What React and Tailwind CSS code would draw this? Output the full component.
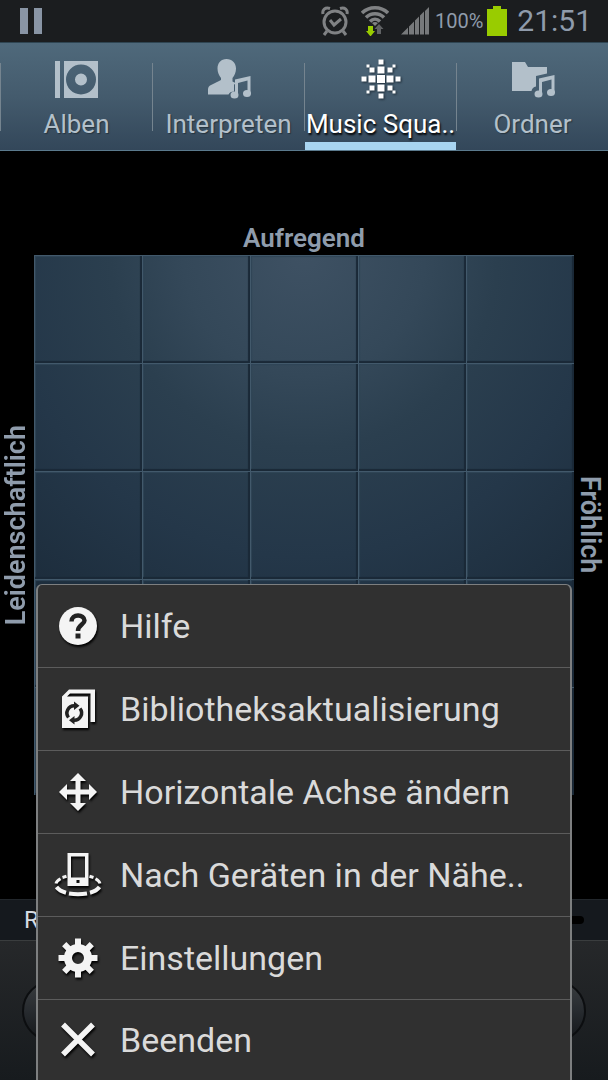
import React, { useState } from "react";
import clsx from "clsx";

const Notes = ({ x, y }) => (
  <g transform={`translate(${x} ${y})`}>
    <path d="M4 3.500 19.500 0v18h-3V4.500L7 7V20H4Z" />
    <ellipse cx="3.500" cy="19" rx="4" ry="3.500" />
    <ellipse cx="16" cy="17.500" rx="4" ry="3.500" />
  </g>
);

const AlbumIcon = () => (
  <svg viewBox="0 0 48 42" className="h-[42px] w-12" fill="currentColor">
    <path d="M2 3h5v37H2Z" />
    <path
      fillRule="evenodd"
      d="M11 3h34v37H11ZM28 6.500a15 15 0 1 0 0 30 15 15 0 0 0 0-30ZM28 15.500a6 6 0 1 1 0 12 6 6 0 0 1 0-12Z"
    />
  </svg>
);

const ArtistIcon = () => (
  <svg viewBox="0 0 48 42" className="h-[42px] w-12" fill="currentColor">
    <path d="M21.500 1c5.500 0 9.500 4 9.500 9.500 0 4-1.500 7-3.500 9.500v3.500l4 2-2.500 1v7c-3 0-4.500 1-5.500 3H3v-5c0-2.500 1-3.500 3-4.500l10-5V20c-2-2.500-3.500-5.500-3.500-9.500C12.500 5 16 1 21.500 1Z" />
    <Notes x="26" y="18" />
  </svg>
);

const squares = [
  [0, 0, 8],
  [0, 9, 7], [0, -9, 7], [9, 0, 7], [-9, 0, 7],
  [0, 17, 5], [0, -17, 5], [17, 0, 5], [-17, 0, 5],
  [9, 9, 5], [-9, 9, 5], [9, -9, 5], [-9, -9, 5],
  [13, 13, 3], [-13, 13, 3], [13, -13, 3], [-13, -13, 3],
];

const SquareIcon = () => (
  <svg viewBox="0 0 48 42" className="h-[42px] w-12 drop-shadow-[1px_1px_1px_#1c2a35]" fill="currentColor">
    {squares.map(([x, y, s]) => (
      <rect key={`${x},${y}`} x={24 + x - s / 2} y={21 + y - s / 2} width={s} height={s} />
    ))}
  </svg>
);

const FolderIcon = () => (
  <svg viewBox="0 0 48 42" className="h-[42px] w-12" fill="currentColor">
    <path d="M3 4h13l3 5h19v6.500L27 18v10.500c-2.500.5-4 2-4.500 4.500H3Z" />
    <Notes x="26" y="17" />
  </svg>
);

const HelpIcon = () => (
  <svg viewBox="0 0 48 48" className="size-12 drop-shadow-[1px_2px_1px_#000]">
    <circle cx="24" cy="24" r="19" fill="#f4f4f4" />
    <path d="M17.500 19.500C17.500 11.500 30.500 12 30.500 18.500 30.500 22.500 24 23 24 29" fill="none" stroke="#222" strokeWidth="4.500" />
    <path d="M21.500 31.500h5v5h-5Z" fill="#222" />
  </svg>
);

const LibraryIcon = () => (
  <svg viewBox="0 0 48 48" className="size-12 drop-shadow-[1px_2px_1px_#000]">
    <path d="M8 11.500 15 4.500h26V37h-4.500V8.500H16l-3 3h21V43H8Z" fill="#f4f4f4" />
    <g fill="none" stroke="#222" strokeWidth="3.500">
      <path d="M14.500 32.500A7.300 7.300 0 0 1 20.500 20.700" />
      <path d="M26 23.500A7.300 7.300 0 0 1 20 35.300" />
    </g>
    <path d="m20 16.500 5.500 4.200-5.500 4.300ZM20.500 31v8.500L15 35.300Z" fill="#222" />
  </svg>
);

const AxisIcon = () => (
  <svg viewBox="0 0 48 48" className="size-12 drop-shadow-[1px_2px_1px_#000]">
    <path
      d="m24 5 8 8h-5.500v8.500H35V16l8 8-8 8v-5.500h-8.500V35H32l-8 8-8-8h5.500v-8.500H13V32l-8-8 8-8v5.500h8.500V13H16Z"
      fill="#f4f4f4"
    />
  </svg>
);

const NearbyIcon = () => (
  <svg viewBox="0 0 48 48" className="size-12 drop-shadow-[1px_2px_1px_#000]">
    <g fill="none" stroke="#f4f4f4" strokeWidth="4">
      <path d="M15 42.500Q24 44 33 42.500" />
      <path d="M2.500 36Q5.500 40 12 41.700M45.500 36Q42.500 40 36 41.700" />
      <path d="M2 32.500Q2.500 30 6.500 27.700M46 32.500Q45.500 30 41.500 27.700" strokeWidth="3" />
      <path d="M8.500 26.500 12.500 25.300M39.500 26.500 35.500 25.300" strokeWidth="3" />
    </g>
    <path
      fillRule="evenodd"
      d="M13.500 2h21v33h-21ZM17 5.500V26.500h14V5.500ZM22.500 29v3h3v-3Z"
      fill="#f4f4f4"
    />
  </svg>
);

const GearIcon = () => (
  <svg viewBox="0 0 48 48" className="size-12 drop-shadow-[1px_2px_1px_#000]">
    <circle cx="24" cy="24" r="10" fill="none" stroke="#f4f4f4" strokeWidth="8" />
    {[0, 45, 90, 135].map((a) => (
      <path key={a} d="M21 4.500h6v8h-6ZM21 35.500h6v8h-6Z" fill="#f4f4f4" transform={`rotate(${a} 24 24)`} />
    ))}
  </svg>
);

const CloseIcon = () => (
  <svg viewBox="0 0 48 48" className="size-12 drop-shadow-[1px_2px_1px_#000]">
    <path d="m9 8.500 30 30M39 8.500l-30 30" stroke="#f4f4f4" strokeWidth="5.500" />
  </svg>
);

const tabs = [
  { title: "Alben", icon: AlbumIcon },
  { title: "Interpreten", icon: ArtistIcon },
  { title: "Music Squa..", icon: SquareIcon },
  { title: "Ordner", icon: FolderIcon },
];

const menuItems = [
  { title: "Hilfe", icon: HelpIcon },
  { title: "Bibliotheksaktualisierung", icon: LibraryIcon },
  { title: "Horizontale Achse ändern", icon: AxisIcon },
  { title: "Nach Geräten in der Nähe..", icon: NearbyIcon },
  { title: "Einstellungen", icon: GearIcon },
  { title: "Beenden", icon: CloseIcon },
];

const StatusBar = () => (
  <header className="flex h-[42px] items-center bg-[#1b1d1f] pr-4 pl-5 text-[#8f9bab]">
    <svg viewBox="0 0 22 28" className="mr-auto h-7 w-[22px]" fill="#8995a5">
      <path d="M0 1h8v26H0ZM14 1h8v26h-8Z" />
    </svg>
    <svg viewBox="0 0 28 30" className="h-[30px] w-7" fill="none" stroke="#808284">
      <circle cx="14" cy="16" r="11" strokeWidth="3" />
      <path d="m9 14 4 5 7-6" strokeWidth="3" />
      <path d="M2 8C1 4 4 1 9 2.500M26 8c1-4-2-7-7-5.500M6 25l-3 4M22 25l3 4" strokeWidth="3" />
    </svg>
    <svg viewBox="0 0 28 30" className="ml-3 h-[30px] w-7" fill="none">
      <g stroke="#808284" strokeWidth="3.500">
        <path d="M1 7C8 0 20 0 27 7" />
        <path d="M5 11.500c5-5 13-5 18 0" />
        <path d="M9 15.500c3-3 7-3 10 0" />
      </g>
      <path d="M14 20l-3-3c2-1.500 4-1.500 6 0Z" fill="#808284" />
      <path d="M7 20h5v5h2l-4.500 5.500L5 25h2Z" fill="#99cc00" />
      <path d="M16 28v-5h-2.500l4.500-5 4.500 5H20v5Z" fill="#606264" />
    </svg>
    <svg viewBox="0 0 28 28" className="ml-3 size-7" fill="#77797b">
      <path d="M0 27.500 7 20.500v7ZM8 19.500l5-5v13H8ZM14 13.500l4-4v18h-4ZM19 8.500l4-4v23h-4ZM24 4l4-4v27.500h-4Z" />
    </svg>
    <span className="ml-1.5 text-[20px] leading-6">100%</span>
    <svg viewBox="0 0 20 30" className="ml-1 h-[30px] w-5" fill="#99cc00">
      <path d="M6 0h8v3h6v27H0V3h6Z" />
    </svg>
    <span className="ml-2.5 text-[30px] leading-9">21:51</span>
  </header>
);

const MoodGrid = () => (
  <main className="flex-1 bg-black pt-[71px] pb-[104px] font-semibold text-[#8f9cac]">
    <p className="mb-px text-center text-[26px] leading-8">Aufregend</p>
    <div className="flex items-center text-[27px] leading-7">
      <span className="flex w-[34px] rotate-180 justify-center pr-0.5 [writing-mode:vertical-rl]">
        Leidenschaftlich
      </span>
      <div className="grid aspect-square flex-1 grid-cols-5 grid-rows-5 bg-[radial-gradient(circle_at_50%_0%,#3e5163_0%,#344859_20%,#2b3f4f_32%,#243749_50%,#1c2c3b_72%,#141c26_100%)]">
        {Array.from({ length: 25 }, (_, i) => (
          <div
            key={i}
            className="border-t border-l border-[#42596b] shadow-[inset_-2px_-2px_1px_#1a2937,inset_1px_1px_1px_#304557]"
          />
        ))}
      </div>
      <span className="flex w-[34px] justify-center pr-1 [writing-mode:vertical-rl]">Fröhlich</span>
    </div>
  </main>
);

const PlayerButton = ({ label, children }) => (
  <button
    aria-label={label}
    className="flex size-[62px] items-center justify-center rounded-full border-2 border-[#0c0e10] bg-linear-to-b from-[#3a3d40] via-[#272b2f] to-[#15181b]"
  >
    {children}
  </button>
);

const Player = () => (
  <footer className="bg-[#181c20]">
    <div className="flex h-[41px] items-center gap-4 border-t border-[#22272c] bg-[#15191e] px-6 text-[24px] text-[#d5dbe2]">
      <span>R</span>
      <div className="h-2 flex-1 rounded-full bg-black" />
    </div>
    <div className="flex h-[140px] items-center justify-between border-t border-[#3a3d3e] bg-linear-to-b from-[#26282a] to-[#171b1e] px-[22px]">
      <PlayerButton label="Zurück">
        <svg viewBox="0 0 34 26" className="h-[26px] w-[34px]" fill="#9aa6b2">
          <path d="M34 0v26L6 13ZM2 0h3v26H2Z" />
        </svg>
      </PlayerButton>
      <PlayerButton label="Weiter">
        <svg viewBox="0 0 34 26" className="h-[26px] w-[34px]" fill="#9aa6b2">
          <path d="M0 0v26l28-13ZM30 0h4v26h-4Z" />
        </svg>
      </PlayerButton>
    </div>
  </footer>
);

export default function App() {
  const [activeTab, setActiveTab] = useState("Music Squa..");

  return (
    <div className="relative flex min-h-screen flex-col bg-black font-[Roboto,sans-serif]">
      <StatusBar />

      <nav className="flex h-[109px] border-t border-b border-t-[#2f4552] border-b-[#5b7a8d] bg-linear-to-b from-[#4f697b] via-[#445b6d] to-[#33475a]">
        {tabs.map(({ title, icon: Icon }) => (
          <div key={title} className="flex flex-1">
            <span className="mt-5 h-[68px] w-px bg-[#75848f]" />
            <button
              className={clsx(
                "flex flex-1 flex-col items-center pt-[15px]",
                activeTab === title
                  ? "border-b-8 border-[#a8d4f0] text-white [text-shadow:1px_2px_2px_#000]"
                  : "text-[#b3c0ca] [text-shadow:1px_1px_1px_#26343f]"
              )}
              onClick={() => setActiveTab(title)}
            >
              <Icon />
              <span className="mt-2 text-[26px] leading-8 whitespace-nowrap">{title}</span>
            </button>
          </div>
        ))}
      </nav>

      <MoodGrid />
      <Player />

      <ul className="absolute inset-x-9 bottom-0 rounded-t-md border-x-2 border-t border-[#7d7f80] bg-[#303030]">
        {menuItems.map(({ title, icon: Icon }) => (
          <li key={title} className="h-[83px] border-b border-[#5c5c5c] last:h-20 last:border-b-0">
            <button className="flex h-full w-full items-center gap-[18px] pl-4 text-left text-[34px] leading-10 whitespace-nowrap text-[#dadada]">
              <Icon />
              {title}
            </button>
          </li>
        ))}
      </ul>
    </div>
  );
}
